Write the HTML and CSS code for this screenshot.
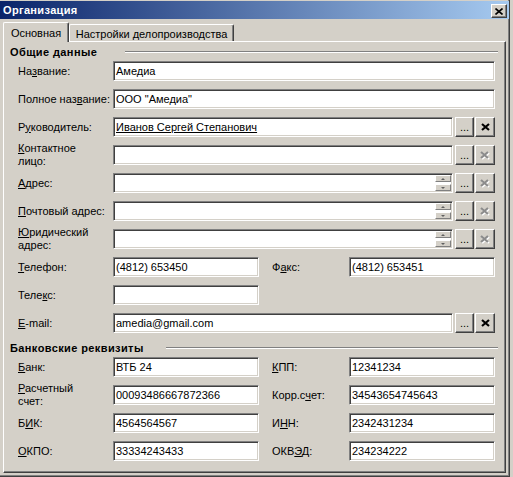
FILE: index.html
```html
<!DOCTYPE html>
<html>
<head>
<meta charset="utf-8">
<link rel="stylesheet" href="styles.css">
</head>
<body>
<div class="window">
  <div class="titlebar">
    <span class="title">Организация</span>
    <span class="close"><svg width="8" height="7" viewBox="0 0 8 7"><path d="M0.5 0.5L7.5 6.5M7.5 0.5L0.5 6.5" stroke="#000" stroke-width="1.6"/></svg></span>
  </div>
  <div class="tabs">
    <div class="tab active">Основная</div>
    <div class="tab">Настройки делопроизводства</div>
  </div>
  <div class="panel">
    <div class="section-head s1"><span class="head-text">Общие данные</span><i class="groove"></i></div>

    <div class="row"><span class="lbl">На<u>з</u>вание:</span><div class="field full"><span class="val">Амедиа</span></div></div>
    <div class="row"><span class="lbl">Полное наз<u>в</u>ание:</span><div class="field full"><span class="val">ООО "Амедиа"</span></div></div>
    <div class="row"><span class="lbl">Р<u>у</u>ководитель:</span><div class="field wide"><span class="val link">Иванов Сергей Степанович</span></div><span class="btn dots">...</span><span class="btn xbtn"><svg width="9" height="8" viewBox="0 0 9 8"><path d="M1 1L8 7M8 1L1 7" stroke="#000" stroke-width="2.2"/></svg></span></div>
    <div class="row"><span class="lbl two"><u>К</u>онтактное<br>лицо:</span><div class="field wide"></div><span class="btn dots">...</span><span class="btn xbtn"><svg width="10" height="9" viewBox="0 0 10 9"><path d="M2 2L9 8M9 2L2 8" stroke="#fff" stroke-width="2.2"/><path d="M1 1L8 7M8 1L1 7" stroke="#8c8c8c" stroke-width="2.2"/></svg></span></div>
    <div class="row"><span class="lbl"><u>А</u>дрес:</span><div class="field wide"><span class="spin"><span class="sb"><i class="up"></i></span><span class="sb"><i class="down"></i></span></span></div><span class="btn dots">...</span><span class="btn xbtn"><svg width="10" height="9" viewBox="0 0 10 9"><path d="M2 2L9 8M9 2L2 8" stroke="#fff" stroke-width="2.2"/><path d="M1 1L8 7M8 1L1 7" stroke="#8c8c8c" stroke-width="2.2"/></svg></span></div>
    <div class="row"><span class="lbl"><u>П</u>очтовый адрес:</span><div class="field wide"><span class="spin"><span class="sb"><i class="up"></i></span><span class="sb"><i class="down"></i></span></span></div><span class="btn dots">...</span><span class="btn xbtn"><svg width="10" height="9" viewBox="0 0 10 9"><path d="M2 2L9 8M9 2L2 8" stroke="#fff" stroke-width="2.2"/><path d="M1 1L8 7M8 1L1 7" stroke="#8c8c8c" stroke-width="2.2"/></svg></span></div>
    <div class="row"><span class="lbl two"><u>Ю</u>ридический<br>адрес:</span><div class="field wide"><span class="spin"><span class="sb"><i class="up"></i></span><span class="sb"><i class="down"></i></span></span></div><span class="btn dots">...</span><span class="btn xbtn"><svg width="10" height="9" viewBox="0 0 10 9"><path d="M2 2L9 8M9 2L2 8" stroke="#fff" stroke-width="2.2"/><path d="M1 1L8 7M8 1L1 7" stroke="#8c8c8c" stroke-width="2.2"/></svg></span></div>
    <div class="row"><span class="lbl"><u>Т</u>елефон:</span><div class="field half"><span class="val">(4812) 653450</span></div><span class="lbl2">Ф<u>а</u>кс:</span><div class="field half"><span class="val">(4812) 653451</span></div></div>
    <div class="row"><span class="lbl">Теле<u>к</u>с:</span><div class="field half"></div></div>
    <div class="row"><span class="lbl"><u>E</u>-mail:</span><div class="field wide"><span class="val">amedia@gmail.com</span></div><span class="btn dots">...</span><span class="btn xbtn"><svg width="9" height="8" viewBox="0 0 9 8"><path d="M1 1L8 7M8 1L1 7" stroke="#000" stroke-width="2.2"/></svg></span></div>

    <div class="section-head s2"><span class="head-text">Банковские реквизиты</span><i class="groove"></i></div>

    <div class="row"><span class="lbl"><u>Б</u>анк:</span><div class="field half"><span class="val">ВТБ 24</span></div><span class="lbl2"><u>К</u>ПП:</span><div class="field half"><span class="val">12341234</span></div></div>
    <div class="row"><span class="lbl two"><u>Р</u>асчетный<br>счет:</span><div class="field half"><span class="val">00093486667872366</span></div><span class="lbl2">Корр.с<u>ч</u>ет:</span><div class="field half"><span class="val">34543654745643</span></div></div>
    <div class="row"><span class="lbl">Б<u>И</u>К:</span><div class="field half"><span class="val">4564564567</span></div><span class="lbl2">И<u>Н</u>Н:</span><div class="field half"><span class="val">2342431234</span></div></div>
    <div class="row"><span class="lbl"><u>О</u>КПО:</span><div class="field half"><span class="val">33334243433</span></div><span class="lbl2">ОКВ<u>Э</u>Д:</span><div class="field half"><span class="val">234234222</span></div></div>
  </div>
</div>
</body>
</html>
```

FILE: styles.css
```css
html, body {
  margin: 0;
  padding: 0;
  background: #d4d0c8;
}
body {
  font-family: "Liberation Sans", Arial, sans-serif;
  font-size: 11px;
  color: #000;
  width: 513px;
  height: 477px;
  overflow: hidden;
}
.window {
  width: 509px;
  height: 475px;
  border-right: 1px solid #404040;
  border-bottom: 1px solid #404040;
  box-shadow: inset -1px -1px #808080;
  padding-top: 1px;
  box-sizing: content-box;
}
.titlebar {
  height: 18px;
  background: linear-gradient(to right, #0a246a, #a6caf0);
  display: flex;
  align-items: center;
  justify-content: space-between;
  padding: 0 2px 0 3px;
}
.title {
  color: #fff;
  font-weight: bold;
  letter-spacing: 0.35px;
}
.close {
  width: 16px;
  height: 14px;
  box-sizing: border-box;
  background: #d4d0c8;
  border: 1px solid;
  border-color: #fff #404040 #404040 #fff;
  box-shadow: inset -1px -1px #808080;
  display: flex;
  align-items: center;
  justify-content: center;
  margin-top: 2px;
}
.close svg { display: block; }
.tabs {
  height: 22px;
  display: flex;
  align-items: flex-end;
  padding-left: 3px;
}
.tab {
  box-sizing: border-box;
  height: 17px;
  width: 165px;
  border: 1px solid #fff;
  border-bottom: none;
  border-right-color: #404040;
  box-shadow: inset -1px 0 #808080;
  border-radius: 2px 2px 0 0;
  display: flex;
  align-items: center;
  justify-content: center;
  padding-top: 1px;
  background: #d4d0c8;
}
.tab.active {
  width: 66px;
  height: 20px;
  margin-bottom: -1px;
  position: relative;
  z-index: 1;
  padding-top: 0;
}
.panel {
  margin-left: 3px;
  width: 503px;
  height: 432px;
  box-sizing: border-box;
  border: 1px solid;
  border-color: #fff #404040 #404040 #fff;
  box-shadow: inset -1px -1px #808080;
  padding-top: 3px;
}
.section-head {
  height: 14px;
  display: flex;
  align-items: center;
  padding: 0 7px 0 6px;
  margin-bottom: 2px;
}
.head-text {
  font-weight: bold;
  letter-spacing: 0.4px;
}
.groove {
  flex: 1;
  height: 0;
  border-top: 1px solid #808080;
  border-bottom: 1px solid #fff;
}
.s1 .groove { margin-left: 28px; }
.s2 { margin-top: 4px; }
.s2 .groove { margin-left: 22px; }
.row {
  height: 20px;
  display: flex;
  align-items: center;
  padding-left: 14px;
  margin-bottom: 8px;
}
.lbl {
  width: 95px;
  flex: none;
  line-height: 13px;
}
.lbl2 {
  width: 77px;
  flex: none;
  margin-left: 13px;
}
.field {
  box-sizing: border-box;
  height: 20px;
  flex: none;
  background: #fff;
  border: 1px solid;
  border-color: #808080 #fff #fff #808080;
  box-shadow: inset 1px 1px #404040, inset -1px -1px #d4d0c8;
  display: flex;
  align-items: center;
  padding-left: 2px;
}
.field.full { width: 382px; }
.field.wide { width: 340px; margin-right: 1px; }
.field.half { width: 146px; }
.val { white-space: nowrap; }
.val.link { text-decoration: underline; }
.spin {
  margin-left: auto;
  margin-right: 1px;
  width: 16px;
  height: 16px;
  display: flex;
  flex-direction: column;
  justify-content: space-between;
}
.sb {
  box-sizing: border-box;
  height: 7px;
  background: #d4d0c8;
  border: 1px solid;
  border-color: #fff #808080 #808080 #fff;
  display: flex;
  align-items: center;
  justify-content: center;
}
.sb i {
  width: 0;
  height: 0;
  border-left: 2px solid transparent;
  border-right: 2px solid transparent;
}
.sb i.up { border-bottom: 2px solid #606060; }
.sb i.down { border-top: 2px solid #606060; }
.btn {
  box-sizing: border-box;
  height: 20px;
  width: 19px;
  flex: none;
  background: #d4d0c8;
  border: 1px solid;
  border-color: #fff #404040 #404040 #fff;
  box-shadow: inset -1px -1px #808080;
  display: flex;
  justify-content: center;
}
.btn.dots {
  align-items: flex-end;
  line-height: 11px;
  padding-bottom: 3px;
  margin-left: 1px;
}
.btn.xbtn {
  width: 20px;
  margin-left: 1px;
  align-items: center;
}
.btn svg { display: block; }
```
